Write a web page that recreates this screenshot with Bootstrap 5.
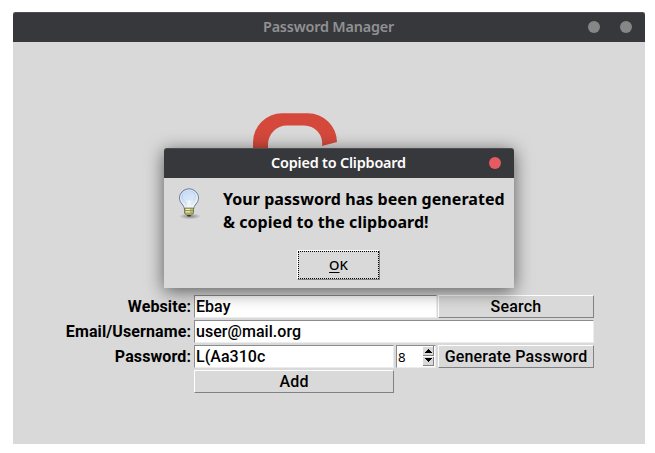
<!DOCTYPE html>
<html lang="en">
<head>
<meta charset="utf-8">
<meta name="viewport" content="width=device-width, initial-scale=1">
<title>Password Manager</title>
<link href="https://cdn.jsdelivr.net/npm/bootstrap@5.3.0/dist/css/bootstrap.min.css" rel="stylesheet">
<style>
body{background:#fff;width:655px;height:453px;overflow:hidden;color:#000}
.app-window{width:632px;height:432px;margin:12px 0 0 13px;background:#d9d9d9}
.title-bar{height:30px;background:#37383c;border-top:1px solid #4b4d52;border-radius:3px 3px 0 0;font:600 14.4px/28px "Noto Sans",sans-serif;letter-spacing:-.19px;padding-right:1px;color:#919193}
.window-dots{right:13px;top:8px;gap:20px}
.window-dot{width:12px;height:12px;border-radius:50%;background:#868686}
.logo-area{height:253px}
.logo-mark{margin:71px 0 0 240px}
.form-rows{display:grid;grid-template-columns:177px 200px 43px 157px;grid-auto-rows:23px;row-gap:2px;margin-left:4px;font:500 16px/21px Roboto,sans-serif}
.field-label{text-align:right;font-weight:700;font-size:16px;letter-spacing:.1px;padding:1px 3px 0 0}
.tk-input{border:1px solid;border-color:#8b8b8b #ececec #ececec #8b8b8b;background:#fff;padding:0 1px;font:inherit;letter-spacing:.04px;color:#000;border-radius:0;outline:0;min-width:0}
.tk-btn{border:1px solid;border-color:#fff #828282 #828282 #fff;background:#d9d9d9;padding:0;font:inherit;line-height:21px;letter-spacing:.19px;color:#000;text-align:center;border-radius:0}
.site-input{grid-column:2/4;width:243px}
.mail-input{grid-column:2/5}
.action-btn{margin-left:1px}
.last-col{grid-column:4}
.spin-box{margin-left:2px;width:40px;border:1px solid;border-color:#8b8b8b #ececec #ececec #8b8b8b;background:#fff;font:13.3px/23px "Noto Sans",sans-serif;padding:0 1px}
.dialog-box{left:164px;top:148px;width:350px;height:140px;background:#d9d9d9;border-radius:3px 3px 0 0;box-shadow:0 3px 18px rgba(0,0,0,.6)}
.dialog-title{color:#fff}
.close-dot{background:#e65a62;right:13px;top:8px}
.dialog-msg{font:700 16px/23px "Noto Sans",sans-serif;letter-spacing:.05px;margin-left:20px;padding-top:10px;white-space:nowrap}
.bulb-icon{margin:7px 0 0 11px}
.ok-btn{width:83px;height:30px;margin:16px 0 0 133px;border:1px solid;border-color:#fff #828282 #828282 #fff;background:#d9d9d9;padding:0;font:500 13.3px/26px "Noto Sans",sans-serif;color:#000}
.ok-focus{height:28px;border:1px dotted #000}
.ok-key{text-decoration:underline;text-underline-offset:2px;text-decoration-thickness:1px}
</style>
<script src="https://cdn.jsdelivr.net/npm/bootstrap@5.3.0/dist/js/bootstrap.bundle.min.js"></script>
</head>
<body>
<main class="app-window d-flex flex-column">
  <header class="title-bar position-relative text-center">Password Manager
    <div class="window-dots position-absolute d-flex"><span class="window-dot"></span><span class="window-dot"></span></div>
  </header>
  <div class="logo-area">
    <svg class="logo-mark d-block" width="84" height="50" viewBox="0 0 84 50"><path fill="#d5493c" d="M0 50V29A29 29 0 0 1 29 .3H55A29 29 0 0 1 84 29L69 33A18 18 0 0 0 51 12.5H34A19 19 0 0 0 15 32V50Z"/></svg>
  </div>
  <form class="form-rows">
    <label class="field-label" for="site">Website:</label>
    <input class="tk-input site-input" id="site" value="Ebay">
    <button type="button" class="tk-btn last-col action-btn">Search</button>
    <label class="field-label" for="mail">Email/Username:</label>
    <input class="tk-input mail-input" id="mail" value="user@mail.org">
    <label class="field-label" for="pass">Password:</label>
    <input class="tk-input" id="pass" value="L(Aa310c">
    <div class="spin-box d-flex justify-content-between"><span>8</span>
      <svg width="11" height="20" viewBox="0 0 11 20" shape-rendering="crispEdges"><path fill="#d9d9d9" d="M0 0h11v20H0z"/><path fill="#fff" d="M0 0h11v1H0zM0 10h11v1H0z"/><path fill="#828282" d="M10 0h1v10H0V9h10zM10 11h1v9H0v-1h10z"/><path fill="#000" d="M5 3h1v1h1v1h1v1h1v1H2V6h1V5h1V4h1zM2 12h7v1H8v1H7v1H6v1H5v-1H4v-1H3v-1H2z"/></svg>
    </div>
    <button type="button" class="tk-btn action-btn">Generate Password</button>
    <span></span>
    <button type="button" class="tk-btn">Add</button>
  </form>
</main>
<section class="dialog-box position-absolute" role="dialog">
  <header class="title-bar dialog-title position-relative text-center">Copied to Clipboard<span class="window-dot close-dot position-absolute"></span></header>
  <div class="d-flex">
    <svg class="bulb-icon" width="28" height="36" viewBox="0 0 28 36">
      <defs>
        <linearGradient id="glass" x1="0" y1="0" x2=".3" y2="1"><stop offset="0" stop-color="#7fa9e6"/><stop offset=".5" stop-color="#c3d9f3"/><stop offset="1" stop-color="#eef2f4"/></linearGradient>
        <radialGradient id="shade"><stop offset="0" stop-color="#000" stop-opacity=".4"/><stop offset="1" stop-color="#000" stop-opacity="0"/></radialGradient>
      </defs>
      <ellipse cx="15" cy="31.3" rx="11" ry="3" fill="url(#shade)"/>
      <g transform="translate(0 .6)">
      <path d="M9.500 23.500C9.500 19 4.500 18 4.500 12.500a9.500 9.300 0 0 1 19 0C23.500 18 18.500 19 18.500 23.500Z" fill="url(#glass)" stroke="#6b7a92"/>
      <path d="M10.500 23C10.500 18.500 5.600 17.500 5.600 12.500a8.400 8.200 0 0 1 16.800 0C22.400 17.500 17.500 18.500 17.500 23" fill="none" stroke="#fff" stroke-opacity=".75"/>
      <ellipse cx="13.500" cy="10.500" rx="6" ry="5.500" fill="#dbe9f9" opacity=".7"/>
      <path d="M11 15l2 2 1-2 1 2 2-2M13 17v6M15 17v6" fill="none" stroke="#fff" stroke-width=".9"/>
      <path d="M9.500 22.500h9v5l-2 2h-5l-2-2z" fill="#c3c27a" stroke="#65663a" stroke-width=".8"/>
      <path d="M10 25h8M10 27.500h8" stroke="#85864c" stroke-width=".8"/><path d="M11 23.800h4M11 26.300h4" stroke="#f4f4c4"/>
      <path d="M12 29.500h4l-1 1.500h-2z" fill="#333"/>
      </g>
    </svg>
    <div class="dialog-msg">Your password has been generated<br>&amp; copied to the clipboard!</div>
  </div>
  <button type="button" class="ok-btn d-block"><div class="ok-focus"><span class="ok-key">O</span>K</div></button>
</section>
</body>
</html>
